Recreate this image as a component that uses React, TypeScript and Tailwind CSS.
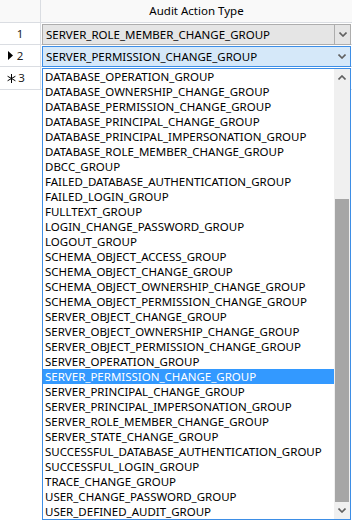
import React from 'react';

const items = [
  'DATABASE_OPERATION_GROUP',
  'DATABASE_OWNERSHIP_CHANGE_GROUP',
  'DATABASE_PERMISSION_CHANGE_GROUP',
  'DATABASE_PRINCIPAL_CHANGE_GROUP',
  'DATABASE_PRINCIPAL_IMPERSONATION_GROUP',
  'DATABASE_ROLE_MEMBER_CHANGE_GROUP',
  'DBCC_GROUP',
  'FAILED_DATABASE_AUTHENTICATION_GROUP',
  'FAILED_LOGIN_GROUP',
  'FULLTEXT_GROUP',
  'LOGIN_CHANGE_PASSWORD_GROUP',
  'LOGOUT_GROUP',
  'SCHEMA_OBJECT_ACCESS_GROUP',
  'SCHEMA_OBJECT_CHANGE_GROUP',
  'SCHEMA_OBJECT_OWNERSHIP_CHANGE_GROUP',
  'SCHEMA_OBJECT_PERMISSION_CHANGE_GROUP',
  'SERVER_OBJECT_CHANGE_GROUP',
  'SERVER_OBJECT_OWNERSHIP_CHANGE_GROUP',
  'SERVER_OBJECT_PERMISSION_CHANGE_GROUP',
  'SERVER_OPERATION_GROUP',
  'SERVER_PERMISSION_CHANGE_GROUP',
  'SERVER_PRINCIPAL_CHANGE_GROUP',
  'SERVER_PRINCIPAL_IMPERSONATION_GROUP',
  'SERVER_ROLE_MEMBER_CHANGE_GROUP',
  'SERVER_STATE_CHANGE_GROUP',
  'SUCCESSFUL_DATABASE_AUTHENTICATION_GROUP',
  'SUCCESSFUL_LOGIN_GROUP',
  'TRACE_CHANGE_GROUP',
  'USER_CHANGE_PASSWORD_GROUP',
  'USER_DEFINED_AUDIT_GROUP',
];

const selected = 'SERVER_PERMISSION_CHANGE_GROUP';

function Chevron({ up = false }: { up?: boolean }) {
  return (
    <svg width="8" height="5" viewBox="0 0 8 5" className={up ? 'rotate-180' : ''}>
      <path d="M0.5 0.5 L4 4 L7.5 0.5" fill="none" stroke="#606060" strokeWidth="1.6" />
    </svg>
  );
}

function Combo({ value, active }: { value: string; active?: boolean }) {
  return (
    <div
      className={`flex h-[21px] w-[309px] ml-px mt-px border ${
        active ? 'border-[#3d8ee6] bg-[#d5e8f9]' : 'border-[#adadad] bg-[#e5e5e5]'
      }`}
    >
      <div className="flex-1 pl-[3px] leading-[19px] text-black">{value}</div>
      <div className={`flex w-[16px] items-center justify-center ${active ? '' : 'border-l border-[#adadad]'}`}>
        <Chevron />
      </div>
    </div>
  );
}

export default function App() {
  return (
    <div className="relative h-[521px] w-[352px] overflow-hidden bg-white text-[11.5px] font-['Noto_Sans',sans-serif] text-black">
      {/* header */}
      <div className="flex h-[23px] border-b border-[#dadde2] bg-[#f9f9f9]">
        <div className="w-[41px] border-r border-[#dadde2]" />
        <div className="flex-1 text-center leading-[22px]">Audit Action Type</div>
      </div>

      {/* rows */}
      <div className="flex h-[22px] border-b border-[#dadde2]">
        <div className="flex w-[41px] items-center justify-center border-r border-[#dadde2] text-[#222]">1</div>
        <div className="flex-1">
          <Combo value="SERVER_ROLE_MEMBER_CHANGE_GROUP" />
        </div>
      </div>
      <div className="flex h-[22px] border-b border-[#dadde2]">
        <div className="relative flex w-[41px] items-center justify-center border-r border-[#dadde2] text-[#222]">
          <svg width="5" height="9" viewBox="0 0 5 9" className="absolute left-[8px] top-[6px]">
            <path d="M0 0 L5 4.5 L0 9 Z" fill="#000" />
          </svg>
          2
        </div>
        <div className="flex-1">
          <Combo value="SERVER_PERMISSION_CHANGE_GROUP" active />
        </div>
      </div>
      <div className="flex h-[23px] border-b border-[#dadde2]">
        <div className="relative flex w-[41px] items-center justify-center border-r border-[#dadde2] text-[#222]">
          <svg width="9" height="9" viewBox="0 0 9 9" className="absolute left-[7px] top-[7px]">
            <path d="M4.5 0 V9 M0.6 2.25 L8.4 6.75 M0.6 6.75 L8.4 2.25" stroke="#000" strokeWidth="1" />
          </svg>
          <span className="ml-[3px]">3</span>
        </div>
        <div className="flex-1" />
      </div>

      {/* dropdown list overlay */}
      <div className="absolute left-[42px] top-[68px] flex h-[452px] w-[309px] border border-[#3d8ee6] bg-white">
        <div className="flex-1">
          {items.map((it) => (
            <div
              key={it}
              className={`h-[15px] pl-[2px] leading-[15px] whitespace-nowrap ${
                it === selected ? 'bg-[#3399ff] text-white' : 'text-black'
              }`}
            >
              {it}
            </div>
          ))}
        </div>
        <div className="flex w-[16px] flex-col bg-[#f0f0f0]">
          <div className="flex h-[17px] items-center justify-center">
            <Chevron up />
          </div>
          <div className="flex flex-1 flex-col justify-end">
            <div className="mx-px h-[303px] bg-[#a6a6a6]" />
          </div>
          <div className="flex h-[17px] items-center justify-center">
            <Chevron />
          </div>
        </div>
      </div>
    </div>
  );
}
